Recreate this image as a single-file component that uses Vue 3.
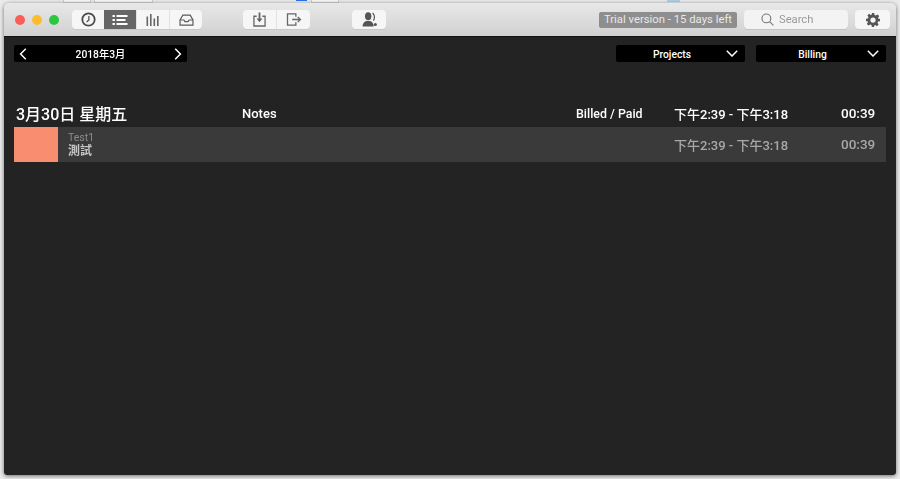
<template>
  <div class="desktop">
    <div class="backdrop-tabs">
      <span class="tab" style="left: 63px; width: 26px"></span>
      <span class="tab" style="left: 94px; width: 57px"></span>
      <span class="blue"></span>
      <span class="tab" style="left: 311px; width: 26px"></span>
      <span class="tab file"></span>
    </div>
    <div class="window">
      <header class="toolbar">
        <div class="lights">
          <span class="light red"></span>
          <span class="light yellow"></span>
          <span class="light green"></span>
        </div>

        <div class="seg views">
          <button class="seg-btn">
            <svg width="15" height="15" viewBox="0 0 16 16" fill="none" stroke="#4a4a4a">
              <circle cx="8" cy="8" r="6.6" stroke-width="1.9" />
              <path d="M8.4 4.2V8.6L6 10.6" stroke-width="1.3" />
            </svg>
          </button>
          <button class="seg-btn active">
            <svg width="16" height="12" viewBox="0 0 16 12" fill="#fff">
              <rect x="0.5" y="1" width="2.4" height="2" />
              <rect x="4.5" y="1" width="11" height="2" />
              <rect x="0.5" y="5" width="2.4" height="2" />
              <rect x="4.5" y="5" width="9" height="2" />
              <rect x="0.5" y="9" width="2.4" height="2" />
              <rect x="4.5" y="9" width="11" height="2" />
            </svg>
          </button>
          <button class="seg-btn">
            <svg width="14" height="12" viewBox="0 0 14 12" fill="#666">
              <rect x="0.5" y="2.5" width="1.6" height="9.5" />
              <rect x="4" y="0" width="1.6" height="12" />
              <rect x="7.5" y="4.5" width="1.6" height="7.5" />
              <rect x="11" y="2" width="1.6" height="10" />
            </svg>
          </button>
          <button class="seg-btn">
            <svg width="15" height="12" viewBox="0 0 16 13" fill="none" stroke="#5a5a5a" stroke-width="1.3">
              <path d="M1 6.5 4 1.2H12L15 6.5V12H1Z" />
              <path d="M1 6.5H5.2L6.4 8.3H9.6L10.8 6.5H15" />
            </svg>
          </button>
        </div>

        <div class="seg actions">
          <button class="seg-btn">
            <svg width="13" height="15" viewBox="0 0 14 16" fill="none" stroke="#666" stroke-width="1.4">
              <path d="M4 4.5H1V15H13V4.5H10" />
              <path d="M7 0.5V9" stroke-width="2" />
              <path d="M3.8 7 7 11 10.2 7Z" fill="#666" stroke="none" />
            </svg>
          </button>
          <button class="seg-btn">
            <svg width="16" height="13" viewBox="0 0 16 14" fill="none" stroke="#666" stroke-width="1.4">
              <path d="M10 4V1H1V13H10V10" />
              <path d="M6 7H14" />
              <path d="M12 4.2 15 7 12 9.8" />
            </svg>
          </button>
        </div>

        <button class="single support">
          <svg width="15" height="15" viewBox="0 0 15 15" fill="#555">
            <ellipse cx="6.2" cy="4.2" rx="3.2" ry="4" />
            <path d="M0.5 14.5C0.6 11 2.4 9.6 4.6 9H7.8C10 9.6 11.6 11 11.8 14.5Z" />
            <path d="M10.6 1C12.8 3 13 6.4 11.4 8.6" fill="none" stroke="#555" stroke-width="1.2" />
            <circle cx="13.4" cy="12.4" r="1.5" />
          </svg>
        </button>

        <div class="trial">Trial version - 15 days left</div>

        <label class="search">
          <svg width="13" height="13" viewBox="0 0 13 13" fill="none" stroke="#777" stroke-width="1.1">
            <circle cx="5.4" cy="5.4" r="4.4" />
            <path d="M8.6 8.6 12.4 12.4" />
          </svg>
          <span>Search</span>
        </label>

        <button class="single gear">
          <svg width="14" height="14" viewBox="0 0 24 24" fill="#555">
            <path fill-rule="evenodd" d="M10 0h4l.6 3.3 2.3 1 2.8-1.9 2.9 2.9-1.9 2.8 1 2.3L24 10v4l-3.3.6-1 2.3 1.9 2.8-2.9 2.9-2.8-1.9-2.3 1L14 24h-4l-.6-3.3-2.3-1-2.8 1.9-2.9-2.9 1.9-2.8-1-2.3L0 14v-4l3.3-.6 1-2.3-1.9-2.8 2.9-2.9 2.8 1.9 2.3-1zM12 7.5a4.5 4.5 0 1 0 0 9 4.5 4.5 0 0 0 0-9z" />
          </svg>
        </button>
      </header>

      <main class="content">
        <div class="filters">
          <div class="pill month">
            <svg width="8" height="12" viewBox="0 0 8 12" fill="none" stroke="#fff" stroke-width="1.5"><path d="M6.8 0.8 1.6 6 6.8 11.2" /></svg>
            <span>2018年3月</span>
            <svg width="8" height="12" viewBox="0 0 8 12" fill="none" stroke="#fff" stroke-width="1.5"><path d="M1.2 0.8 6.4 6 1.2 11.2" /></svg>
          </div>
          <div class="pill select projects">
            <span>Projects</span>
            <svg width="12" height="7" viewBox="0 0 12 7" fill="none" stroke="#fff" stroke-width="1.5"><path d="M0.8 0.8 6 6 11.2 0.8" /></svg>
          </div>
          <div class="pill select">
            <span>Billing</span>
            <svg width="12" height="7" viewBox="0 0 12 7" fill="none" stroke="#fff" stroke-width="1.5"><path d="M0.8 0.8 6 6 11.2 0.8" /></svg>
          </div>
        </div>

        <div class="day-head">
          <div class="day-date">3月30日 星期五</div>
          <div class="day-notes">Notes</div>
          <div class="day-billed">Billed / Paid</div>
          <div class="day-time">下午2:39 - 下午3:18</div>
          <div class="day-total">00:39</div>
        </div>

        <div class="entry">
          <div class="swatch"></div>
          <div class="entry-text">
            <div class="project">Test1</div>
            <div class="task">測試</div>
          </div>
          <div class="entry-time">下午2:39 - 下午3:18</div>
          <div class="entry-total">00:39</div>
        </div>
      </main>
    </div>
  </div>
</template>

<script setup>
</script>

<style>
html, body {
  margin: 0;
  background: #e9e9e9;
}
</style>

<style scoped>
.desktop {
  position: relative;
  width: 900px;
  height: 479px;
  overflow: hidden;
  box-sizing: border-box;
  padding: 3px 4px 4px;
  background: #ebebeb;
  font-family: Roboto, "Noto Sans CJK TC", sans-serif;
}

.backdrop-tabs .tab {
  position: absolute;
  top: 0;
  height: 2px;
  background: #f8f8f8;
  border: 1px solid #cfcfcf;
  border-top: 0;
}
.backdrop-tabs .blue {
  position: absolute;
  top: 0;
  left: 296px;
  width: 11px;
  height: 1px;
  background: #2a74e8;
}
.backdrop-tabs .file {
  left: 667px;
  width: 13px;
  background: #a9d1ee;
  border: 0;
}

.window {
  display: flex;
  flex-direction: column;
  position: relative;
  height: 472px;
  border-radius: 5px 5px 3px 3px;
  overflow: hidden;
  box-shadow: 0 1px 4px rgba(0, 0, 0, 0.55);
  filter: blur(0.3px);
}

.toolbar {
  display: flex;
  align-items: center;
  flex: none;
  height: 34px;
  box-sizing: border-box;
  padding: 0 6px 0 11px;
  background: linear-gradient(#e9e8e9, #d2d1d2);
  border-bottom: 1px solid #111;
}

.lights {
  display: flex;
  gap: 7px;
  width: 57px;
}
.light {
  width: 10px;
  height: 10px;
  border-radius: 50%;
}
.red { background: #fb5d58; }
.yellow { background: #fdbb2e; }
.green { background: #2cc640; }

.seg {
  display: flex;
  height: 19px;
  background: #f6f6f6;
  border-radius: 4px;
  box-shadow: 0 1px 0 #c8c8c8;
}
.views { width: 130px; }
.actions { width: 67px; margin-left: 41px; }

.seg-btn {
  flex: 1;
  display: flex;
  align-items: center;
  justify-content: center;
  padding: 0;
  border: 0;
  border-left: 1px solid #e2e2e2;
  background: transparent;
}
.seg-btn:first-child {
  border-left: 0;
}
.seg-btn.active {
  background: #666;
  border-left: 0;
}

.single {
  display: flex;
  align-items: center;
  justify-content: center;
  padding: 0;
  height: 19px;
  border: 0;
  border-radius: 4px;
  background: #f6f6f6;
  box-shadow: 0 1px 0 #c8c8c8;
}
.support {
  width: 34px;
  margin-left: 42px;
}

.trial {
  width: 138px;
  height: 16px;
  margin-left: auto;
  border-radius: 2px;
  background: #8e8e8e;
  color: #e9e9e9;
  font-size: 11.3px;
  line-height: 16px;
  text-align: center;
  white-space: nowrap;
}

.search {
  display: flex;
  align-items: center;
  gap: 5px;
  box-sizing: border-box;
  width: 104px;
  height: 19px;
  margin-left: 7px;
  padding-left: 17px;
  background: #f3f3f3;
  border-radius: 4px;
  box-shadow: 0 1px 0 #c4c4c4;
  color: #9a9a9a;
  font-size: 11.2px;
}

.gear {
  width: 35px;
  margin-left: 7px;
}

.content {
  flex: 1;
  padding: 8px 10px 0;
  background: #232323;
}

.filters {
  display: flex;
  gap: 11px;
}
.pill {
  display: flex;
  align-items: center;
  box-sizing: border-box;
  height: 17px;
  padding: 0 6px;
  background: #000;
  border-radius: 2px;
  color: #fff;
  font-size: 10.3px;
  font-weight: 500;
}
.pill span {
  flex: 1;
  text-align: center;
}
.month {
  width: 173px;
  padding: 0 5px;
  margin-right: auto;
}
.select {
  width: 130px;
  padding-right: 7px;
}
.select.projects {
  width: 129px;
}
.select span {
  padding-right: 4px;
  padding-top: 1px;
}

.day-head {
  display: flex;
  align-items: center;
  height: 22px;
  margin-top: 40px;
  margin-bottom: 3px;
  color: #fff;
  font-size: 13px;
  font-weight: 500;
  white-space: nowrap;
}
.day-date {
  width: 228px;
  padding-left: 2px;
  box-sizing: border-box;
  font-size: 16px;
}
.day-notes {
  width: 334px;
}
.day-billed {
  width: 98px;
  font-size: 12.4px;
}
.day-time {
  width: 167px;
}
.day-total {
  font-size: 13.5px;
}

.entry {
  display: flex;
  align-items: center;
  height: 35px;
  background: #3a3a3a;
  white-space: nowrap;
}
.swatch {
  flex: none;
  width: 44px;
  height: 35px;
  background: #f98d70;
}
.entry-text {
  flex: 1;
  padding-left: 10px;
  padding-top: 2px;
}
.project {
  color: #8c8c8c;
  font-size: 10.5px;
  line-height: 11px;
}
.task {
  color: #c4c4c4;
  font-size: 12px;
  line-height: 16px;
  font-weight: 700;
}
.entry-time {
  width: 167px;
  padding-bottom: 1px;
  color: #a8a8a8;
  font-size: 13px;
  font-weight: 500;
}
.entry-total {
  width: 45px;
  padding-bottom: 1px;
  color: #a8a8a8;
  font-size: 13.5px;
  font-weight: 500;
}
</style>
